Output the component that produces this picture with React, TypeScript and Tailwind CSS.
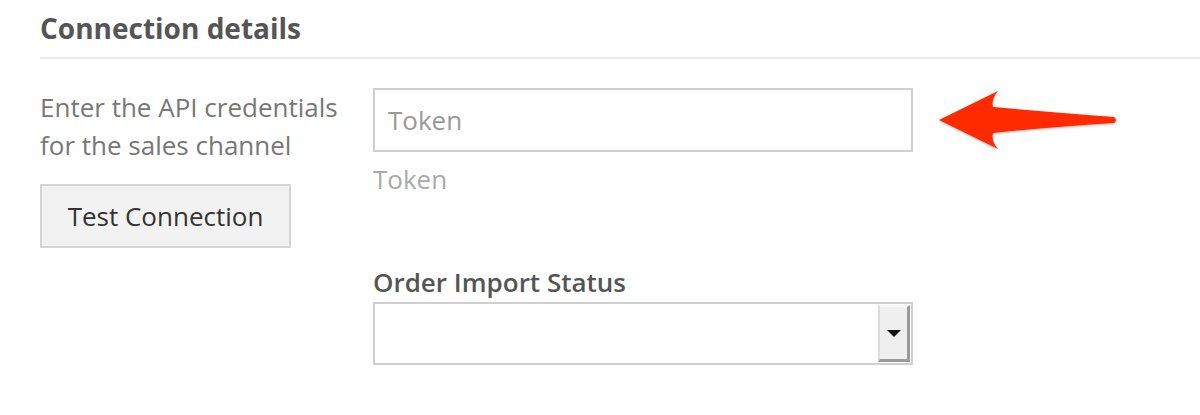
export default function App() {
  return (
    <div className="relative w-[1200px] h-[415px] bg-white overflow-hidden font-['Open_Sans',sans-serif]">
      <div className="pl-10 pt-[10px]">
        <h2 className="text-[28px] leading-[36px] font-bold text-[#555]">Connection details</h2>
      </div>
      <div className="ml-10 mt-[11px] h-[2px] bg-[#ebebeb]" />

      <div className="flex pl-10 pt-[29px]">
        {/* left column */}
        <div className="w-[333px] flex flex-col items-start">
          <p className="text-[26px] leading-[38px] text-[#777]">
            Enter the API credentials
            <br />
            for the sales channel
          </p>
          <button className="mt-[20px] w-[251px] h-[64px] bg-[#f2f2f2] border-2 border-[#d4d4d4] text-[26px] text-[#333]">
            Test Connection
          </button>
        </div>

        {/* right column */}
        <div className="w-[540px]">
          <div className="h-[64px] border-2 border-[#cfcfcf] flex items-center pl-[13px]">
            <span className="text-[26px] text-[#999]">Token</span>
          </div>
          <div className="mt-[12px] text-[26px] leading-[30px] text-[#aaa]">Token</div>

          <div className="mt-[73px] text-[26px] leading-[30px] font-semibold text-[#555]">Order Import Status</div>
          <div className="mt-[5px] h-[63px] border-2 border-[#d0d0d0] flex justify-end p-[1px]">
            <div className="w-[32px] h-full bg-[#efefef] border-l-2 border-t-2 border-r-[3px] border-b-[3px] border-l-[#dcdcdc] border-t-[#f7f7f7] border-r-[#9a9a9a] border-b-[#9a9a9a] flex items-center justify-center">
              <svg width="14" height="7" viewBox="0 0 14 7">
                <path d="M0 0 L14 0 L7 7 Z" fill="#111" />
              </svg>
            </div>
          </div>
        </div>
      </div>

      {/* red annotation arrow */}
      <svg className="absolute left-[930px] top-[85px]" width="195" height="75" viewBox="0 0 195 75">
        <defs>
          <filter id="sh" x="-10%" y="-10%" width="120%" height="130%">
            <feDropShadow dx="0" dy="1" stdDeviation="1" floodColor="#000" floodOpacity="0.3" />
          </filter>
        </defs>
        <path
          d="M9 35 L68 6 Q61 14 63 22 Q120 27 184 32 Q188 35 184 38 Q120 42 63 48 Q61 56 68 64 Z"
          fill="#ff2a00"
          filter="url(#sh)"
        />
      </svg>
    </div>
  );
}
